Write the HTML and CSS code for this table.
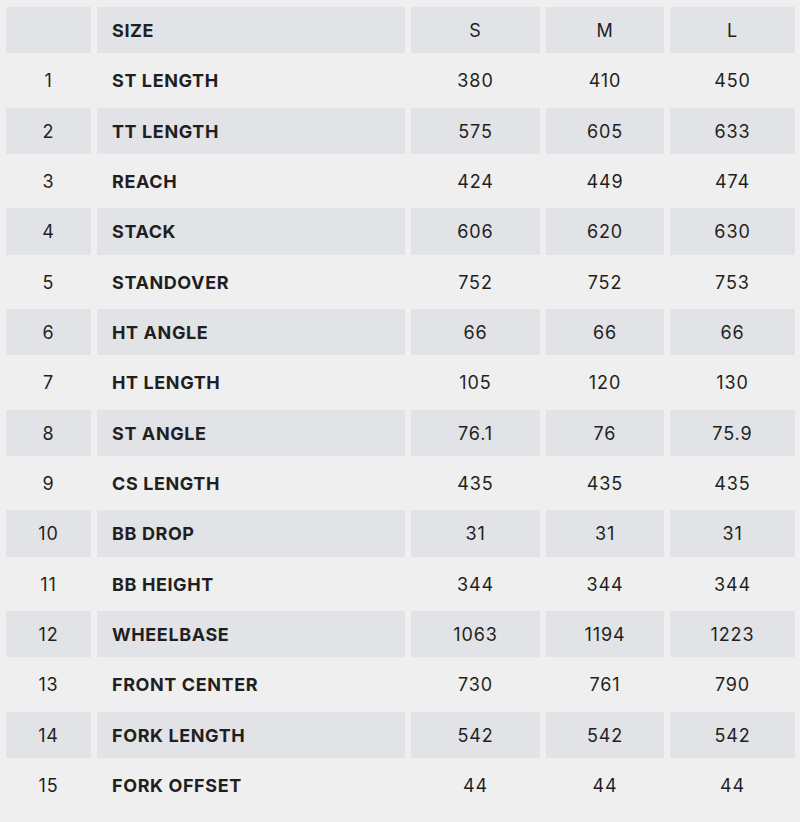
FILE: index.html
```html
<!DOCTYPE html>
<html lang="en">
<head>
<meta charset="utf-8">
<title>Geometry</title>
<link rel="stylesheet" href="styles.css">
</head>
<body>
<table class="geo">
  <colgroup>
    <col class="c-num"><col class="c-name"><col class="c-s"><col class="c-m"><col class="c-l">
  </colgroup>
  <thead>
    <tr class="shade"><th></th><th class="name">SIZE</th><th>S</th><th>M</th><th>L</th></tr>
  </thead>
  <tbody>
    <tr><td>1</td><td class="name">ST LENGTH</td><td>380</td><td>410</td><td>450</td></tr>
    <tr class="shade"><td>2</td><td class="name">TT LENGTH</td><td>575</td><td>605</td><td>633</td></tr>
    <tr><td>3</td><td class="name">REACH</td><td>424</td><td>449</td><td>474</td></tr>
    <tr class="shade"><td>4</td><td class="name">STACK</td><td>606</td><td>620</td><td>630</td></tr>
    <tr><td>5</td><td class="name">STANDOVER</td><td>752</td><td>752</td><td>753</td></tr>
    <tr class="shade"><td>6</td><td class="name">HT ANGLE</td><td>66</td><td>66</td><td>66</td></tr>
    <tr><td>7</td><td class="name">HT LENGTH</td><td>105</td><td>120</td><td>130</td></tr>
    <tr class="shade"><td>8</td><td class="name">ST ANGLE</td><td>76.1</td><td>76</td><td>75.9</td></tr>
    <tr><td>9</td><td class="name">CS LENGTH</td><td>435</td><td>435</td><td>435</td></tr>
    <tr class="shade"><td>10</td><td class="name">BB DROP</td><td>31</td><td>31</td><td>31</td></tr>
    <tr><td>11</td><td class="name">BB HEIGHT</td><td>344</td><td>344</td><td>344</td></tr>
    <tr class="shade"><td>12</td><td class="name">WHEELBASE</td><td>1063</td><td>1194</td><td>1223</td></tr>
    <tr><td>13</td><td class="name">FRONT CENTER</td><td>730</td><td>761</td><td>790</td></tr>
    <tr class="shade"><td>14</td><td class="name">FORK LENGTH</td><td>542</td><td>542</td><td>542</td></tr>
    <tr><td>15</td><td class="name">FORK OFFSET</td><td>44</td><td>44</td><td>44</td></tr>
  </tbody>
</table>
</body>
</html>
```

FILE: styles.css
```css
html {
  overflow: hidden;
  background: #efefef;
}
body {
  margin: 0;
  background: #efefef;
  font-family: "Inter", "Noto Sans", sans-serif;
  color: #1f1f22;
}
.geo {
  border-collapse: separate;
  border-spacing: 6px 4px;
  table-layout: fixed;
  width: 801px;
  margin-top: 3px;
}
.c-num { width: 85px; }
.c-name { width: 308px; }
.c-s { width: 129px; }
.c-m { width: 118px; }
.c-l { width: 125px; }
.geo th,
.geo td {
  height: 46.33px;
  padding: 2px 0 0;
  box-sizing: border-box;
  text-align: center;
  vertical-align: middle;
  font-size: 18px;
  font-weight: 400;
  letter-spacing: 0.9px;
  line-height: 20px;
}
.geo .name {
  text-align: left;
  padding-left: 15px;
  font-weight: 700;
  letter-spacing: 0.6px;
}
.shade th,
.shade td {
  background: #e2e3e6;
}
```
